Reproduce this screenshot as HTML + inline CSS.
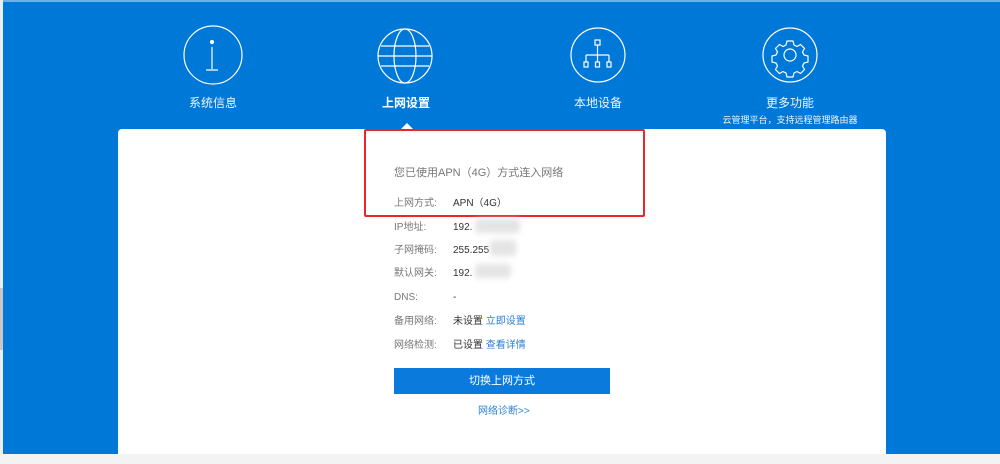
<!DOCTYPE html>
<html><head><meta charset="utf-8"><style>
*{margin:0;padding:0;box-sizing:border-box}
body{width:1000px;height:464px;overflow:hidden;background:#0078d7;position:relative;font-family:"Liberation Sans","Noto Sans CJK SC",sans-serif}
.top{position:absolute;left:0;top:0;width:1000px;height:2px;background:#6fb0ea}
.left{position:absolute;left:0;top:0;width:3px;height:454px;background:#e8eef5}
.left2{position:absolute;left:0;top:288px;width:3px;height:62px;background:#c8c8c8}
.nav{position:absolute;color:#eef5fc;font-size:12px;line-height:14px;text-align:center;width:160px}
.card{position:absolute;left:118px;top:129px;width:768px;height:325px;background:#fff;border-radius:4px 4px 0 0}
.arrow{position:absolute;left:401px;top:123px;width:0;height:0;border-left:6px solid transparent;border-right:6px solid transparent;border-bottom:6px solid #fff}
.red{position:absolute;left:364px;top:129px;width:281px;height:88px;border:2px solid #e8262b;border-radius:2px}
.t{position:absolute;font-size:10px;line-height:14px;height:14px;color:#777;white-space:nowrap}
.t *{vertical-align:top}
.v{color:#333}
.lnk{color:#2b7fd6}
.blur{position:absolute;background:#e4e4e4;filter:blur(3px);border-radius:3px}
.btn{position:absolute;left:394px;top:368px;width:216px;height:26px;background:#0a7bdc;color:#fff;font-size:11px;text-align:center;line-height:26px}
.bar{position:absolute;left:0;top:454px;width:1000px;height:10px;background:#f3f3f3}
</style></head><body>
<div class="top"></div>
<div class="left"></div><div class="left2"></div>
<svg width="1000" height="130" style="position:absolute;left:0;top:0" fill="none" stroke="#fff" stroke-width="1.2">
<circle cx="213" cy="55" r="29"/>
<circle cx="212" cy="42" r="1.5" fill="#fff"/><path d="M212 47v22M206 70h12"/>
<circle cx="405" cy="56" r="27"/>
<ellipse cx="405" cy="56" rx="11" ry="27"/><path d="M378 56h54M381 46h48M381 66h48"/>
<circle cx="598" cy="55" r="27"/>
<rect x="595" y="40" width="5" height="5"/><path d="M597.5 45v10M586 55h23M586 55v7M597.5 55v7M609 55v7"/>
<rect x="584" y="62" width="4" height="5"/><rect x="595.5" y="62" width="4" height="5"/><rect x="607" y="62" width="4" height="5"/>
<circle cx="790" cy="55" r="27"/>
<circle cx="790" cy="55" r="6"/>
<path d="M787 41h6l1 4 3 1.5 3.5-2 4 4-2 3.5 1.5 3 4 1v6l-4 1-1.5 3 2 3.5-4 4-3.5-2-3 1.5-1 4h-6l-1-4-3-1.5-3.5 2-4-4 2-3.5-1.5-3-4-1v-6l4-1 1.5-3-2-3.5 4-4 3.5 2 3-1.5z"/>
</svg>
<div class="nav" style="left:133px;top:96px">系统信息</div>
<div class="nav" style="left:326px;top:96px;font-weight:bold;color:#fff">上网设置</div>
<div class="nav" style="left:518px;top:96px">本地设备</div>
<div class="nav" style="left:710px;top:96px">更多功能</div>
<div class="nav" style="left:690px;top:113px;width:200px;font-size:9px">云管理平台，支持远程管理路由器</div>
<div class="card"></div>
<div class="arrow"></div>
<div class="red"></div>
<div class="t" style="left:394px;top:166px;font-size:11px">您已使用APN（4G）方式连入网络</div>
<div class="t" style="left:394px;top:197px">上网方式:</div><div class="t v" style="left:453px;top:197px">APN（4G）</div>
<div class="t" style="left:394px;top:221px">IP地址:</div><div class="t v" style="left:453px;top:221px">192.</div>
<div class="blur" style="left:475px;top:219px;width:45px;height:14px"></div>
<div class="t" style="left:394px;top:244px">子网掩码:</div><div class="t v" style="left:453px;top:244px">255.255</div>
<div class="blur" style="left:490px;top:240px;width:26px;height:16px"></div>
<div class="t" style="left:394px;top:267px">默认网关:</div><div class="t v" style="left:453px;top:267px">192.</div>
<div class="blur" style="left:475px;top:264px;width:36px;height:14px"></div>
<div class="t" style="left:394px;top:291px">DNS:</div><div class="t v" style="left:453px;top:291px">-</div>
<div class="t" style="left:394px;top:315px">备用网络:</div><div class="t v" style="left:453px;top:315px">未设置 <span class="lnk">立即设置</span></div>
<div class="t" style="left:394px;top:339px">网络检测:</div><div class="t v" style="left:453px;top:339px">已设置 <span class="lnk">查看详情</span></div>
<div class="btn">切换上网方式</div>
<div class="t lnk" style="left:478px;top:405px">网络诊断&gt;&gt;</div>
<div class="bar"></div>
</body></html>
